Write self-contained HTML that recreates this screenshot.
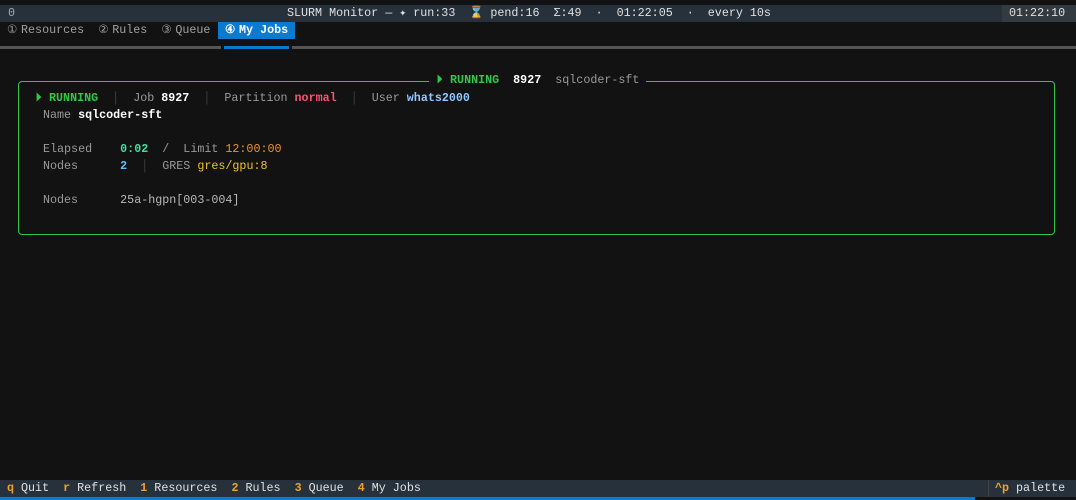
<!DOCTYPE html>
<html><head><meta charset="utf-8"><style>
body{margin:0;width:1076px;height:500px;background:#121212;position:relative;overflow:hidden;font-family:"Liberation Mono","DejaVu Sans Mono",monospace;font-size:11.7px;color:#c8c8c8}
.a{position:absolute;white-space:pre;line-height:17px;height:17px}
.g{color:#9a9a9a}.w{color:#fff;font-weight:bold}.gr{color:#2fc84a;font-weight:bold}
.o{color:#f0a030;font-weight:bold}
.c{display:inline-block;width:7.02px;overflow:visible;text-align:center}
</style></head><body>
<div class="a" style="left:0;top:5px;width:1076px;background:#27313b;color:#d8d8d8"></div>
<div class="a" style="left:8px;top:5px;color:#aaa">0</div>
<div class="a" style="left:287px;top:5px;color:#e0e0e0">SLURM Monitor — <span class="c">✦</span> run:33  <span class="c" style="color:#f0b040;width:14px">⌛</span> pend:16  Σ:49  ·  01:22:05  ·  every 10s</div>
<div class="a" style="left:1002px;top:5px;width:74px;background:#333a40;color:#e0e0e0"> 01:22:10</div>
<div class="a" style="left:7px;top:22px;color:#a0a0a0"><span class="c">①</span> Resources  <span class="c">②</span> Rules  <span class="c">③</span> Queue</div>
<div class="a" style="left:218px;top:22px;width:77px;background:#0a7bd0;color:#fff;font-weight:bold"> <span class="c">④</span> My Jobs</div>
<div style="position:absolute;left:0;top:46px;width:1076px;height:3px;background:#555"></div>
<div style="position:absolute;left:221px;top:46px;width:3px;height:3px;background:#121212"></div>
<div style="position:absolute;left:224px;top:46px;width:65px;height:3px;background:#0a7bd0"></div>
<div style="position:absolute;left:289px;top:46px;width:3px;height:3px;background:#121212"></div>
<div style="position:absolute;left:18px;top:81px;width:1035px;height:152px;border:1px solid #2fc84a;border-radius:4px"></div>
<div class="a" style="left:429px;top:72px;background:#121212"> <span class="gr"><span class="c">⏵</span> RUNNING</span>  <span class="w">8927</span>  <span class="g">sqlcoder-sft</span> </div>
<div class="a" style="left:35px;top:90px"><span class="gr"><span class="c">⏵</span> RUNNING</span>  <span style="color:#444">│</span>  <span class="g">Job</span> <span class="w">8927</span>  <span style="color:#444">│</span>  <span class="g">Partition</span> <span style="color:#ff5070;font-weight:bold">normal</span>  <span style="color:#444">│</span>  <span class="g">User</span> <span style="color:#90c8ff;font-weight:bold">whats2000</span></div>
<div class="a" style="left:43px;top:107px"><span class="g">Name</span> <span class="w">sqlcoder-sft</span></div>
<div class="a" style="left:43px;top:141px"><span class="g">Elapsed</span>    <span style="color:#40e0a0;font-weight:bold">0:02</span>  <span class="g">/  Limit</span> <span style="color:#f09030">12:00:00</span></div>
<div class="a" style="left:43px;top:158px"><span class="g">Nodes</span>      <span style="color:#60c0ff;font-weight:bold">2</span>  <span style="color:#444">│</span>  <span class="g">GRES</span> <span style="color:#f0c030">gres/gpu:8</span></div>
<div class="a" style="left:43px;top:192px"><span class="g">Nodes</span>      <span style="color:#b8b8b8">25a-hgpn[003-004]</span></div>
<div class="a" style="left:0;top:480px;width:1076px;background:#27313b"></div>
<div class="a" style="left:7px;top:480px;color:#e0e0e0"><span class="o">q</span> Quit  <span class="o">r</span> Refresh  <span class="o">1</span> Resources  <span class="o">2</span> Rules  <span class="o">3</span> Queue  <span class="o">4</span> My Jobs</div>
<div style="position:absolute;left:988px;top:480px;width:1px;height:17px;background:#444"></div>
<div class="a" style="left:995px;top:480px;color:#e0e0e0"><span class="o">^p</span> palette</div>
<div style="position:absolute;left:0;top:497px;width:975px;height:3px;background:#0a7bd0"></div>
</body></html>
